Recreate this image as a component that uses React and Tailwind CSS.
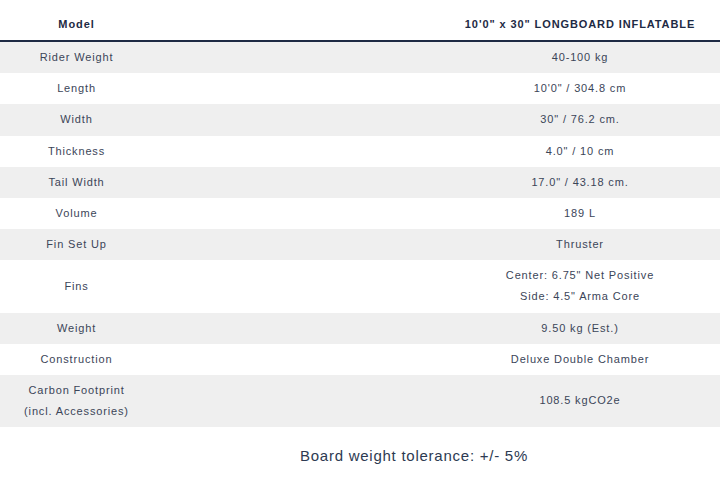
import React from "react";

const specs = [
  { label: ["Rider Weight"], value: ["40-100 kg"] },
  { label: ["Length"], value: ["10'0\" / 304.8 cm"] },
  { label: ["Width"], value: ["30\" / 76.2 cm."] },
  { label: ["Thickness"], value: ["4.0\" / 10 cm"] },
  { label: ["Tail Width"], value: ["17.0\" / 43.18 cm."] },
  { label: ["Volume"], value: ["189 L"] },
  { label: ["Fin Set Up"], value: ["Thruster"] },
  {
    label: ["Fins"],
    value: ["Center: 6.75\" Net Positive", "Side: 4.5\" Arma Core"],
  },
  { label: ["Weight"], value: ["9.50 kg (Est.)"] },
  { label: ["Construction"], value: ["Deluxe Double Chamber"] },
  {
    label: ["Carbon Footprint", "(incl. Accessories)"],
    value: ["108.5 kgCO2e"],
  },
];

const Cell = ({ lines, className = "" }) => (
  <div className={`flex flex-col items-center justify-center text-center ${className}`}>
    {lines.map((l) => (
      <span key={l} className="leading-[21px] whitespace-nowrap">
        {l}
      </span>
    ))}
  </div>
);

const App = () => {
  return (
    <div
      className="w-[720px] h-[477px] bg-white overflow-hidden"
      style={{ fontFamily: '"Liberation Sans", Arial, sans-serif' }}
    >
      {/* Header */}
      <div className="grid grid-cols-[153px_1fr] h-[42px] pt-[17px] border-b-2 border-[#1e2a44] text-[11px] leading-[14px] font-bold tracking-[0.9px] text-[#1e2a44]">
        <div className="text-center">Model</div>
        <div className="pl-[287px] text-center">10'0" x 30" LONGBOARD INFLATABLE</div>
      </div>

      {/* Rows */}
      <div className="text-[11px] tracking-[0.85px] text-[#3b4558]">
        {specs.map((row, i) => (
          <div
            key={row.label[0]}
            className={`grid grid-cols-[153px_1fr] py-[5.1px] ${
              i % 2 === 0 ? "bg-[#efefef]" : "bg-white"
            }`}
          >
            <Cell lines={row.label} />
            <Cell lines={row.value} className="pl-[287px]" />
          </div>
        ))}
      </div>

      {/* Footer note */}
      <div className="flex justify-center pl-[108px] pt-[18px] text-[15px] tracking-[0.75px] text-[#2d3a52]">
        Board weight tolerance: +/- 5%
      </div>
    </div>
  );
};

export default App;
